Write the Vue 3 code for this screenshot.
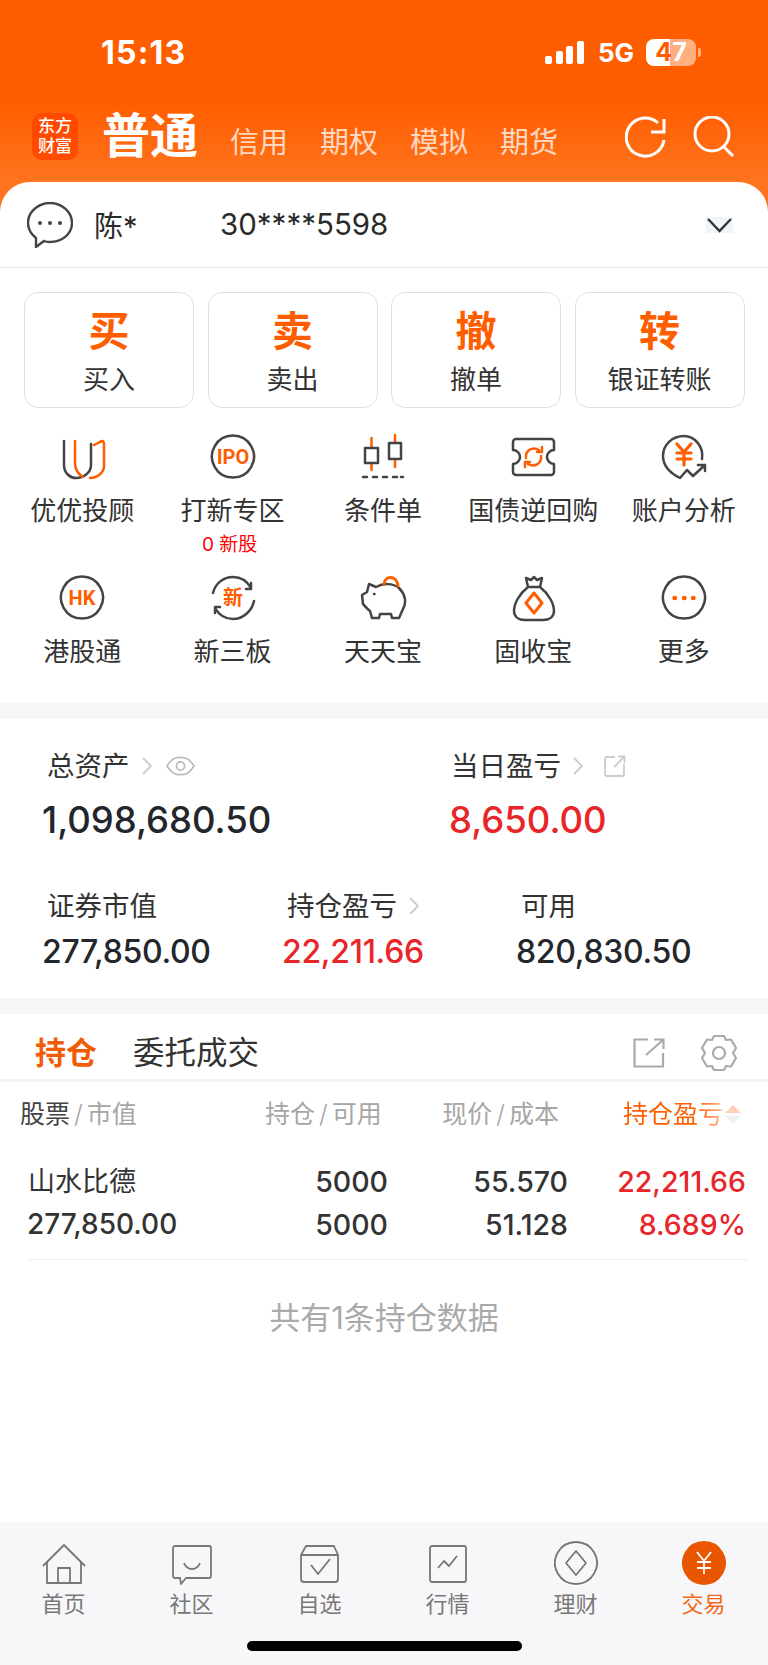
<template>
  <div class="page">
    <!-- status bar -->
    <div class="status">
      <span class="time">15:13</span>
      <div class="signal">
        <i class="bar b1"></i><i class="bar b2"></i><i class="bar b3"></i><i class="bar b4"></i>
      </div>
      <span class="net">5G</span>
      <div class="battery"><span class="bat-a">4</span><span class="bat-b">7</span></div>
      <i class="nub"></i>
    </div>

    <!-- account type tabs -->
    <div class="top">
      <div class="logo">东方<br />财富</div>
      <div class="main-type">普通</div>
      <div class="types">
        <span v-for="t in types" :key="t">{{ t }}</span>
      </div>
      <svg class="top-icon refresh" viewBox="0 0 42 42" fill="none" stroke="#fff" stroke-width="3">
        <path d="M39 24A19 19 0 1 1 33 7" />
        <path d="M39 3V16H26" />
      </svg>
      <svg class="top-icon" viewBox="0 0 42 42" fill="none" stroke="#fff" stroke-width="3">
        <circle cx="19" cy="18" r="17" />
        <path d="M31 31L40 40" />
      </svg>
    </div>

    <div class="sheet-wrap">
      <div class="account">
        <svg class="chat" viewBox="0 0 46 46" fill="none" stroke="#444" stroke-width="2.4">
          <path d="M23 1C35 1 45 10 45 21C45 32 35 40 23 40C21 40 19 40 17 39L9 45L9 36C4 32 1 27 1 21C1 10 11 1 23 1Z" />
          <circle cx="13" cy="21" r="2" fill="#444" stroke="none" />
          <circle cx="23" cy="21" r="2" fill="#444" stroke="none" />
          <circle cx="33" cy="21" r="2" fill="#444" stroke="none" />
        </svg>
        <span class="name">陈*</span>
        <span class="acc-no">30****5598</span>
        <div class="chevron">
          <svg viewBox="0 0 27 16" fill="none" stroke="#333" stroke-width="2.4">
            <path d="M2 2L13.5 14L25 2" />
          </svg>
        </div>
      </div>
    </div>

    <!-- buy / sell buttons -->
    <div class="actions">
      <div v-for="a in actions" :key="a.big" class="action">
        <div class="action-big">{{ a.big }}</div>
        <div class="action-label">{{ a.label }}</div>
      </div>
    </div>

    <!-- feature grid -->
    <div class="grid">
      <div v-for="item in features" :key="item.label" class="cell">
        <svg class="cell-icon" viewBox="0 0 48 48" fill="none" stroke-width="2.5" stroke-linejoin="round" stroke-linecap="round">
          <path v-for="s in item.shapes" :key="s.d" :d="s.d" :stroke="s.c" :fill="s.f || 'none'" :stroke-width="s.w" />
          <text v-if="item.text" x="24" :y="item.textY" text-anchor="middle" class="cell-text" :class="{ latin: item.latin }" :font-size="item.textSize">{{ item.text }}</text>
        </svg>
        <div class="cell-label">{{ item.label }}</div>
        <div v-if="item.sub" class="cell-sub">{{ item.sub }}</div>
      </div>
    </div>

    <div class="band"></div>

    <!-- assets -->
    <div class="assets">
      <div class="asset-row first">
        <div class="stat w407">
          <div class="stat-label">
            总资产
            <svg class="arrow" viewBox="0 0 10 20" fill="none" stroke="#ccc" stroke-width="1.8"><path d="M1 2L9 10L1 18" /></svg>
            <svg class="eye" viewBox="0 0 30 20" fill="none" stroke="#bbb" stroke-width="1.8">
              <path d="M1 10C6 2 10 1 15 1C20 1 24 2 29 10C24 18 20 19 15 19C10 19 6 18 1 10Z" />
              <circle cx="15" cy="10" r="4.2" />
            </svg>
          </div>
          <div class="value big">1,098,680.50</div>
        </div>
        <div class="stat">
          <div class="stat-label near">
            当日盈亏
            <svg class="arrow" viewBox="0 0 10 20" fill="none" stroke="#ccc" stroke-width="1.8"><path d="M1 2L9 10L1 18" /></svg>
            <svg class="share-s" viewBox="0 0 22 22" fill="none" stroke="#ccc" stroke-width="1.8">
              <path d="M11 2H3A2 2 0 0 0 1 4V19A2 2 0 0 0 3 21H18A2 2 0 0 0 20 19V9" />
              <path d="M10 12L20 2M14 1.500H20.500V8" />
            </svg>
          </div>
          <div class="value big red">8,650.00</div>
        </div>
      </div>
      <div class="asset-row second">
        <div class="stat w240">
          <div class="stat-label">证券市值</div>
          <div class="value">277,850.00</div>
        </div>
        <div class="stat w234">
          <div class="stat-label">
            持仓盈亏
            <svg class="arrow" viewBox="0 0 10 20" fill="none" stroke="#ccc" stroke-width="1.8"><path d="M1 2L9 10L1 18" /></svg>
          </div>
          <div class="value red">22,211.66</div>
        </div>
        <div class="stat">
          <div class="stat-label">可用</div>
          <div class="value">820,830.50</div>
        </div>
      </div>
    </div>

    <div class="band"></div>

    <!-- positions -->
    <div class="tabs">
      <span class="tab active">持仓</span>
      <span class="tab">委托成交</span>
      <svg class="tab-share" viewBox="0 0 32 30" fill="none" stroke="#aaa" stroke-width="2.2">
        <path d="M15 1.500H1.500V28.500H30V15" />
        <path d="M13 17L30 2M21 1.500H30.500V11" />
      </svg>
      <svg class="tab-gear" viewBox="0 0 38 38" fill="none" stroke="#aaa" stroke-width="2.2" stroke-linejoin="round">
        <path d="M14 2H24L26 6L31 5.500L36 14L33 19L36 24L31 32.500L26 32L24 36H14L12 32L7 32.500L2 24L5 19L2 14L7 5.500L12 6Z" />
        <circle cx="19" cy="19" r="6" />
      </svg>
    </div>

    <div class="thead">
      <div><span class="th-dark">股票</span><span class="slash">/</span>市值</div>
      <div class="right">持仓<span class="slash">/</span>可用</div>
      <div class="right">现价<span class="slash">/</span>成本</div>
      <div class="th-sort">
        <span class="th-orange">持仓盈亏</span>
        <span class="sort"><i class="up"></i><i class="down"></i></span>
      </div>
    </div>

    <div class="trow">
      <div>山水比德</div>
      <div class="right">5000</div>
      <div class="right">55.570</div>
      <div class="right red">22,211.66</div>
      <div class="mv">277,850.00</div>
      <div class="right">5000</div>
      <div class="right">51.128</div>
      <div class="right red">8.689%</div>
    </div>
    <div class="row-line"></div>
    <div class="total">共有1条持仓数据</div>

    <!-- bottom nav -->
    <div class="nav">
      <div class="nav-items">
        <div v-for="n in navItems" :key="n.label" class="nav-item" :class="{ on: n.on }">
          <svg class="nav-icon" viewBox="0 0 44 44" fill="none" stroke-width="1.8" stroke-linejoin="round">
            <path v-for="s in n.shapes" :key="s.d" :d="s.d" :stroke="s.c || '#777'" :fill="s.f || 'none'" />
          </svg>
          <div class="nav-label">{{ n.label }}</div>
        </div>
      </div>
      <div class="home-bar"></div>
    </div>
  </div>
</template>

<script setup>
const dark = '#444'
const orange = '#ff5e00'

const types = ['信用', '期权', '模拟', '期货']

const actions = [
  { big: '买', label: '买入' },
  { big: '卖', label: '卖出' },
  { big: '撤', label: '撤单' },
  { big: '转', label: '银证转账' }
]

const circle = 'M24 2.500A21 21 0 1 1 23.900 2.500Z'

const features = [
  {
    label: '优优投顾',
    shapes: [
      { d: 'M6 8V32C6 40 12 45 18 45C25 45 33 40 33 32V11', c: dark },
      { d: 'M17 8V30C17 36 20 41 25 44', c: orange },
      { d: 'M36 12C39 11 41 9 44 8C46 8 46 10 46 12V33C46 39 40 45 32 45', c: orange }
    ]
  },
  {
    label: '打新专区',
    sub: '0 新股',
    text: 'IPO',
    latin: true,
    textY: 31,
    textSize: 20,
    shapes: [{ d: circle, c: dark }]
  },
  {
    label: '条件单',
    shapes: [
      { d: 'M12.500 5V15M12.500 30V37M36 2V10M36 26V34', c: orange },
      { d: 'M6 15H19V30H6ZM30 10H42V26H30Z', c: dark },
      { d: 'M4 44H8M14 44H18M24 44H28M34 44H38M42 44H44', c: dark }
    ]
  },
  {
    label: '国债逆回购',
    shapes: [
      { d: 'M7 6H42A3 3 0 0 1 45 9V17A7 7 0 0 0 45 31V39A3 3 0 0 1 42 42H7A3 3 0 0 1 4 39V31A7 7 0 0 0 4 17V9A3 3 0 0 1 7 6Z', c: dark },
      { d: 'M17 25C16 18 23 13 30 17M33 14V19H28M32 23C33 30 26 35 19 31M16 34V29H21', c: orange }
    ]
  },
  {
    label: '账户分析',
    shapes: [
      { d: 'M42 26C44 13 34 3 24 3C12 3 3 12 3 23C3 31 8 39 20 45L27 37L33 43L45 32M38 32H45V38', c: dark },
      { d: 'M17 11L24 19L31 11M24 19V32M17 20H31M17 26H31', c: orange, w: 3.2 }
    ]
  },
  {
    label: '港股通',
    text: 'HK',
    latin: true,
    textY: 31,
    textSize: 20,
    shapes: [{ d: circle, c: dark }]
  },
  {
    label: '新三板',
    text: '新',
    textY: 31,
    textSize: 20,
    shapes: [
      { d: 'M4 19C6 10 14 3 24 3C31 3 38 7 42 14M42 9V15H37', c: dark },
      { d: 'M45 27C43 37 34 45 24 45C17 45 10 41 6 34M6 39V33H11', c: dark }
    ]
  },
  {
    label: '天天宝',
    shapes: [
      { d: 'M10 10L17 13C24 9 34 9 40 14C46 20 48 28 44 35L40 44H33L32 40H21L20 44H13L11 37C8 35 6 32 4 30L3 21L8 18Z', c: dark },
      { d: 'M15 20H15.500', c: dark },
      { d: 'M25 10C26 1 38 1 39 12', c: orange, w: 3 }
    ]
  },
  {
    label: '固收宝',
    shapes: [
      { d: 'M17 4L22 6L25 3L28 6L33 4L31 13C40 20 45 30 45 37C45 43 40 46 34 46H16C10 46 5 43 5 37C5 30 10 20 19 13ZM19 13H31', c: dark },
      { d: 'M25 19L33 29L25 39L17 29Z', c: orange, w: 3 }
    ]
  },
  {
    label: '更多',
    shapes: [
      { d: circle, c: dark },
      { d: 'M14.500 24H15M24 24H24.500M33 24H33.500', c: orange, w: 4.5 }
    ]
  }
]

const navItems = [
  {
    label: '首页',
    shapes: [{ d: 'M1 25L22 4L43 25M5 21V42H39V21M16 42V27H28V42' }]
  },
  {
    label: '社区',
    shapes: [
      { d: 'M5 5H39A2 2 0 0 1 41 7V35A2 2 0 0 1 39 37H16L11 43L10 37H5A2 2 0 0 1 3 35V7A2 2 0 0 1 5 5Z' },
      { d: 'M14 22C17 30 27 30 30 22' }
    ]
  },
  {
    label: '自选',
    shapes: [
      { d: 'M3 14L8 5H36L40 14V38A3 3 0 0 1 37 41H6A3 3 0 0 1 3 38ZM3 14H40' },
      { d: 'M13 24L20 33L32 18' }
    ]
  },
  {
    label: '行情',
    shapes: [
      { d: 'M6 5H38A2 2 0 0 1 40 7V39A2 2 0 0 1 38 41H6A2 2 0 0 1 4 39V7A2 2 0 0 1 6 5Z' },
      { d: 'M12 27L18 20L23 25L31 15' }
    ]
  },
  {
    label: '理财',
    shapes: [
      { d: 'M22 1A21 21 0 1 1 21.900 1Z' },
      { d: 'M22 10L32 22L22 34L12 22Z' }
    ]
  },
  {
    label: '交易',
    on: true,
    shapes: [
      { d: 'M22 1A21 21 0 1 1 21.900 1Z', c: '#e85600', f: '#e85600' },
      { d: 'M15 11L22 20L29 11M22 20V33M15 21H29M15 27H29', c: '#fff' }
    ]
  }
]
</script>

<style>
html,
body {
  margin: 0;
  background: #fff;
}
</style>

<style scoped>
.page {
  width: 768px;
  height: 1665px;
  overflow: hidden;
  display: flex;
  flex-direction: column;
  background: #fff;
  font-family: Inter, "Noto Sans CJK SC", sans-serif;
  color: #333;
}

.status {
  height: 105px;
  flex: none;
  box-sizing: border-box;
  padding: 0 0 1px 101px;
  display: flex;
  align-items: center;
  background: #ff5e00;
  color: #fff;
}
.time {
  width: 444px;
  font-size: 32px;
  font-weight: 700;
  letter-spacing: 1.2px;
}
.signal {
  display: flex;
  align-items: flex-end;
  gap: 3.500px;
  height: 23px;
  width: 53px;
}
.bar {
  width: 7px;
  background: #fff;
  border-radius: 2px;
}
.b1 { height: 8px; }
.b2 { height: 13px; }
.b3 { height: 18px; }
.b4 { height: 23px; }
.net {
  width: 48px;
  font-size: 26px;
  font-weight: 700;
}
.battery {
  width: 50px;
  height: 27px;
  border-radius: 8px;
  background: linear-gradient(90deg, #fff 47%, rgba(255, 255, 255, 0.5) 47%);
  display: flex;
  justify-content: center;
  align-items: center;
  font-size: 25px;
  font-weight: 700;
  line-height: 27px;
}
.bat-a { color: #ff5e00; }
.bat-b { color: #fff; }
.nub {
  width: 3px;
  height: 9px;
  margin-left: 2px;
  border-radius: 0 2px 2px 0;
  background: rgba(255, 255, 255, 0.5);
}

.top {
  height: 77px;
  flex: none;
  box-sizing: border-box;
  padding-left: 32px;
  display: flex;
  align-items: flex-start;
  background: linear-gradient(#ff5e00, #ff741f);
  color: #fff;
}
.logo {
  width: 46px;
  height: 47px;
  margin-top: 8px;
  border-radius: 10px;
  background: #ff4a00;
  text-align: center;
  font-size: 17px;
  line-height: 20px;
  font-weight: 500;
  padding-top: 3px;
  box-sizing: border-box;
}
.main-type {
  margin: 3px 0 0 24px;
  font-size: 48px;
  line-height: 56px;
  font-weight: 700;
}
.types {
  display: flex;
  gap: 32px;
  margin: 21px 0 0 32px;
  font-size: 29px;
  line-height: 34px;
  color: #ffd8c2;
}
.top-icon {
  width: 42px;
  height: 42px;
  margin: 11px 0 0 26px;
}
.refresh {
  margin-left: 67px;
}

.sheet-wrap {
  flex: none;
  background: #ff741f;
}
.account {
  height: 86px;
  box-sizing: border-box;
  padding: 0 35px 0 27px;
  display: flex;
  align-items: center;
  background: #fff;
  border-radius: 30px 30px 0 0;
  border-bottom: 1px solid #ececec;
  color: #2b2b2b;
}
.chat {
  width: 46px;
  height: 46px;
  flex: none;
}
.name {
  width: 126px;
  margin: 0 0 2px 21px;
  font-size: 29px;
}
.acc-no {
  margin-bottom: 2px;
  font-size: 29.5px;
}
.chevron {
  width: 27px;
  height: 16px;
  margin-left: auto;
  background: #eef6fd;
  display: flex;
}

.actions {
  flex: none;
  display: grid;
  grid-template-columns: repeat(4, 170px);
  gap: 13.5px;
  padding: 24px 0 0 24px;
}
.action {
  height: 116px;
  box-sizing: border-box;
  border: 1.500px solid #e0e0e0;
  border-radius: 14px;
  text-align: center;
}
.action-big {
  margin-top: 13px;
  font-size: 41px;
  line-height: 50px;
  font-weight: 700;
  color: #ff5e00;
}
.action-label {
  margin-top: 8px;
  font-size: 26px;
  line-height: 32px;
  color: #333;
}

.grid {
  flex: none;
  display: grid;
  grid-template-columns: repeat(5, 150.4px);
  grid-template-rows: 141px 93px;
  padding: 25px 0 36px 7px;
}
.cell {
  position: relative;
  text-align: center;
}
.cell-icon {
  display: block;
  width: 48px;
  height: 48px;
  margin: 0 auto 15px;
}
.cell-text {
  font-family: "Noto Sans CJK SC", sans-serif;
  font-weight: 700;
  fill: #ff5e00;
}
.cell-text.latin {
  font-family: Roboto, sans-serif;
}
.cell-label {
  font-size: 26px;
  line-height: 30px;
  color: #333;
  white-space: nowrap;
}
.cell-sub {
  position: absolute;
  top: 101px;
  left: 0;
  right: 6px;
  font-size: 19px;
  line-height: 22px;
  color: #f00;
}

.band {
  height: 16px;
  flex: none;
  background: #f5f6f8;
}

.assets {
  height: 279px;
  flex: none;
  box-sizing: border-box;
  padding: 31px 0 0 42px;
}
.asset-row {
  display: flex;
}
.second {
  margin-top: 48px;
}
.w407 { width: 407px; }
.w240 { width: 240px; }
.w234 { width: 234px; }
.stat-label {
  display: flex;
  align-items: center;
  padding-left: 5px;
  font-size: 27.5px;
  line-height: 32px;
  color: #333;
}
.stat-label.near {
  padding-left: 2px;
}
.arrow {
  width: 10px;
  height: 20px;
  margin-left: 12px;
}
.eye {
  width: 29px;
  height: 20px;
  margin-left: 14px;
}
.share-s {
  width: 22px;
  height: 22px;
  margin-left: 21px;
}
.value {
  font-size: 32px;
  line-height: 40px;
  font-weight: 500;
  color: #23262b;
  letter-spacing: -0.3px;
}
.value.big {
  margin-top: 16px;
  font-size: 36.5px;
  line-height: 44px;
  letter-spacing: 0;
}
.second .value {
  margin-top: 10px;
}
.value.red,
.trow .red {
  color: #e8262a;
}

.tabs {
  height: 68px;
  flex: none;
  box-sizing: border-box;
  padding: 13px 30px 0 35px;
  display: flex;
  align-items: center;
  border-bottom: 3px solid #f4f4f4;
}
.tab {
  font-size: 31.5px;
  line-height: 40px;
  margin-right: 36px;
  color: #333;
}
.tab.active {
  font-size: 31px;
  font-weight: 700;
  color: #f25c05;
}
.tab-share {
  width: 32px;
  height: 30px;
  margin-left: auto;
}
.tab-gear {
  width: 38px;
  height: 38px;
  margin-left: 35px;
}

.thead {
  flex: none;
  display: grid;
  grid-template-columns: 245px 114px 180px 182px;
  padding: 17px 0 0 20px;
  font-size: 25px;
  line-height: 30px;
  color: #a6a6a6;
  white-space: nowrap;
}
.th-dark {
  color: #444;
}
.slash {
  margin: 0 4px;
  font-weight: 300;
}
.th-sort {
  display: flex;
  justify-content: flex-end;
  align-items: center;
  gap: 2px;
}
.th-orange {
  background: linear-gradient(90deg, #ff5e00 72%, #ffb78c 100%);
  -webkit-background-clip: text;
  background-clip: text;
  color: transparent;
}
.sort {
  display: flex;
  flex-direction: column;
  gap: 3px;
}
.sort i {
  display: block;
  width: 0;
  height: 0;
  border-left: 8px solid transparent;
  border-right: 8px solid transparent;
}
.sort .up {
  border-bottom: 8px solid #ffd0b5;
}
.sort .down {
  border-top: 8px solid #f0f0f0;
}
.right {
  text-align: right;
}

.trow {
  flex: none;
  display: grid;
  grid-template-columns: 230px 131px 180px 178px;
  padding: 31px 0 13px 27px;
  font-size: 28.5px;
  line-height: 43px;
  font-weight: 500;
  color: #333;
}
.trow div:first-child {
  padding-left: 1px;
  font-size: 27px;
  font-weight: 400;
}
.trow .mv {
  font-size: 28px;
}
.row-line {
  height: 1px;
  flex: none;
  margin: 0 20px 0 27px;
  background: #f0f0f0;
}
.total {
  flex: none;
  margin-top: 38px;
  text-align: center;
  font-size: 31px;
  line-height: 40px;
  color: #aaa;
}

.nav {
  height: 143px;
  margin-top: auto;
  flex: none;
  box-sizing: border-box;
  padding-top: 19px;
  background: #f7f7f9;
}
.nav-items {
  display: grid;
  grid-template-columns: repeat(6, 128px);
}
.nav-item {
  text-align: center;
}
.nav-icon {
  display: block;
  width: 44px;
  height: 44px;
  margin: 0 auto 7px;
}
.nav-label {
  padding-right: 1px;
  font-size: 22px;
  line-height: 25px;
  color: #777;
}
.nav-item.on .nav-label {
  color: #f0691c;
}
.home-bar {
  width: 275px;
  height: 10px;
  margin: 24px auto 0;
  border-radius: 5px;
  background: #000;
}
</style>
